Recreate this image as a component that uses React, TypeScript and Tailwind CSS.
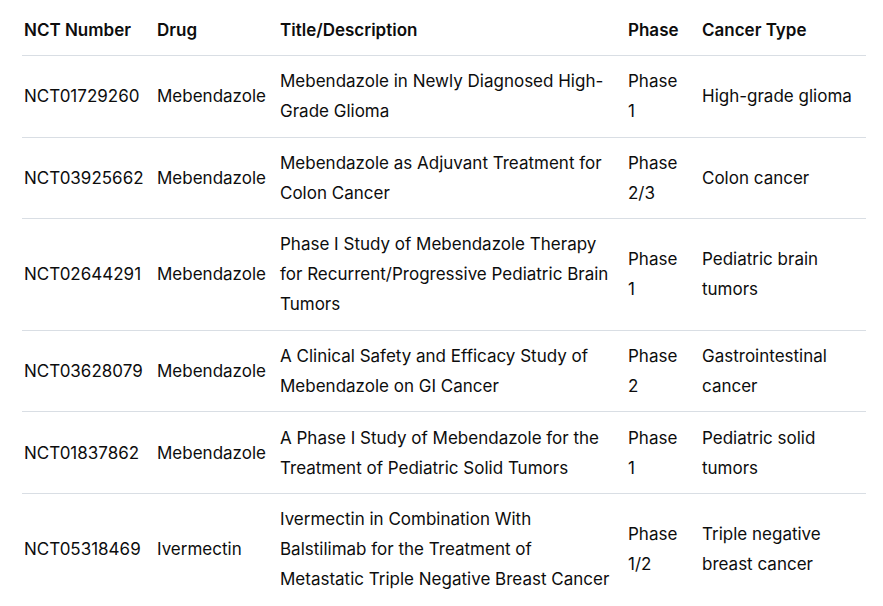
const rows = [
  {
    nct: "NCT01729260",
    drug: "Mebendazole",
    title: "Mebendazole in Newly Diagnosed High-Grade Glioma",
    phase: "Phase 1",
    cancer: "High-grade glioma",
  },
  {
    nct: "NCT03925662",
    drug: "Mebendazole",
    title: "Mebendazole as Adjuvant Treatment for Colon Cancer",
    phase: "Phase 2/3",
    cancer: "Colon cancer",
  },
  {
    nct: "NCT02644291",
    drug: "Mebendazole",
    title: "Phase I Study of Mebendazole Therapy for Recurrent/Progressive Pediatric Brain Tumors",
    phase: "Phase 1",
    cancer: "Pediatric brain tumors",
  },
  {
    nct: "NCT03628079",
    drug: "Mebendazole",
    title: "A Clinical Safety and Efficacy Study of Mebendazole on GI Cancer",
    phase: "Phase 2",
    cancer: "Gastrointestinal cancer",
  },
  {
    nct: "NCT01837862",
    drug: "Mebendazole",
    title: "A Phase I Study of Mebendazole for the Treatment of Pediatric Solid Tumors",
    phase: "Phase 1",
    cancer: "Pediatric solid tumors",
  },
  {
    nct: "NCT05318469",
    drug: "Ivermectin",
    title: "Ivermectin in Combination With Balstilimab for the Treatment of Metastatic Triple Negative Breast Cancer",
    phase: "Phase 1/2",
    cancer: "Triple negative breast cancer",
  },
];

const headers = ["NCT Number", "Drug", "Title/Description", "Phase", "Cancer Type"];

export default function App() {
  return (
    <div className="min-h-screen bg-white pl-[22px] font-['Inter',sans-serif] text-[17px] leading-[30px] text-[#0d0d0d]">
      <table className="w-[844px] table-fixed border-collapse">
        <colgroup>
          <col className="w-[133px]" />
          <col className="w-[123px]" />
          <col className="w-[348px]" />
          <col className="w-[74px]" />
          <col className="w-[166px]" />
        </colgroup>
        <thead>
          <tr className="border-b border-[#d9dee4]">
            {headers.map((h) => (
              <th key={h} className="pt-[15px] pb-[10px] pl-[2px] pr-3 text-left font-semibold">
                {h}
              </th>
            ))}
          </tr>
        </thead>
        <tbody>
          {rows.map((r) => (
            <tr key={r.nct} className="border-b border-[#d9dee4] last:border-b-0">
              <td className="py-[10.3px] pl-[2px] pr-3 align-middle">{r.nct}</td>
              <td className="py-[10.3px] pl-[2px] pr-3 align-middle">{r.drug}</td>
              <td className="py-[10.3px] pl-[2px] pr-3 align-middle">{r.title}</td>
              <td className="py-[10.3px] pl-[2px] pr-3 align-middle">{r.phase}</td>
              <td className="py-[10.3px] pl-[2px] pr-3 align-middle">{r.cancer}</td>
            </tr>
          ))}
        </tbody>
      </table>
    </div>
  );
}
